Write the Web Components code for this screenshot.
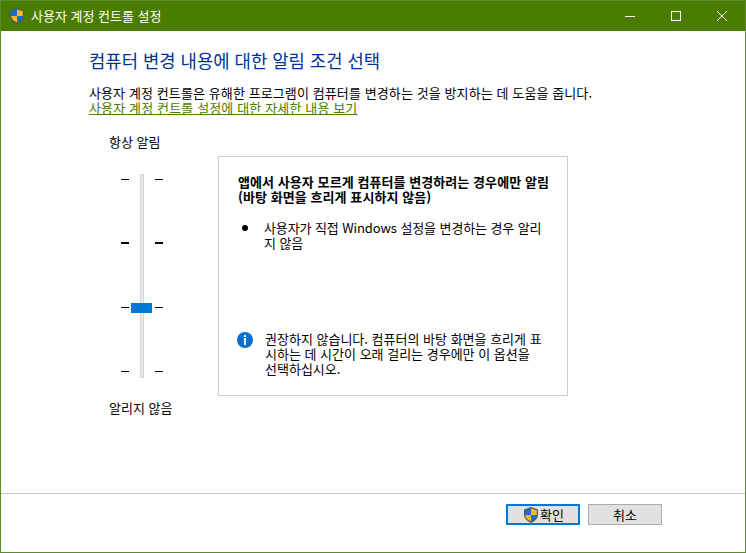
<!DOCTYPE html>
<html lang="ko">
<head>
<meta charset="utf-8">
<title>사용자 계정 컨트롤 설정</title>
<style>
  html, body { margin: 0; height: 100%; background: #fff; }
  body { font: 13px/15px "Noto Sans CJK KR", "Noto Sans", sans-serif; color: #000; overflow: hidden; }
</style>
</head>
<body>
<uac-window></uac-window>
<script>
const SHIELD = `
  <svg viewBox="0 0 14 16" width="14" height="16" aria-hidden="true">
    <path d="M7 0 14 2.4v5.4c0 3.6-3 6.3-7 8.2C3 14.1 0 11.4 0 7.8V2.4Z" fill="#4f5a63"/>
    <path d="M7 1.4V8H1.2V3.3Z" fill="#0f73c8"/>
    <path d="M7 1.4 12.8 3.3V8H7Z" fill="#f8b62c"/>
    <path d="M1.2 8H7v6.6C3.7 13 1.3 11 1.2 8Z" fill="#f8b62c"/>
    <path d="M7 8h5.8C12.7 11 10.3 13 7 14.6Z" fill="#0f73c8"/>
  </svg>`;

class UacTitlebar extends HTMLElement {
  connectedCallback() {
    this.attachShadow({ mode: "open" });
    this.shadowRoot.innerHTML = `
      <style>
        :host {
          display: flex;
          align-items: center;
          box-sizing: border-box;
          height: 31px;
          background: #4a7c00;
          border-top: 1px solid #5f8a2c;
          color: #fff;
          flex: none;
        }
        .icon { display: flex; margin: 0 7px 0 9px; }
        .title { flex: 1; padding-bottom: 1px; }
        .btn {
          width: 46px;
          height: 30px;
          display: flex;
          align-items: center;
          justify-content: center;
        }
        .btn svg { display: block; }
      </style>
      <span class="icon">${SHIELD}</span>
      <span class="title"><slot></slot></span>
      <span class="btn"><svg width="10" height="10"><path d="M0 5.5h10" stroke="#fff"/></svg></span>
      <span class="btn"><svg width="10" height="10"><rect x=".5" y=".5" width="9" height="9" fill="none" stroke="#fff"/></svg></span>
      <span class="btn"><svg width="10" height="10"><path d="M0 0l10 10M10 0L0 10" stroke="#fff"/></svg></span>
    `;
  }
}
customElements.define("uac-titlebar", UacTitlebar);

class UacSlider extends HTMLElement {
  connectedCallback() {
    this.attachShadow({ mode: "open" });
    const row = (bold) => `<div class="tick-row${bold ? " bold" : ""}"><i></i><i></i></div>`;
    this.shadowRoot.innerHTML = `
      <style>
        :host {
          display: flex;
          flex-direction: column;
          width: 129px;
          flex: none;
        }
        .label { padding-left: 20px; height: 15px; white-space: nowrap; }
        .scale {
          position: relative;
          height: 204px;
          margin: 25px 0 22px;
        }
        .track {
          position: absolute;
          left: 51px;
          top: 0;
          width: 2px;
          height: 202px;
          background: #e7eaea;
          border: 1px solid #d6d6d6;
        }
        .ticks {
          position: absolute;
          left: 32px;
          top: 5px;
          width: 42px;
          height: 193px;
          display: flex;
          flex-direction: column;
          justify-content: space-between;
        }
        .tick-row { display: flex; justify-content: space-between; height: 1px; }
        .tick-row i { display: block; width: 8px; height: 1px; background: #000; }
        .tick-row.bold i { height: 2px; margin-top: -1px; }
        .thumb {
          position: absolute;
          left: 42px;
          top: 129px;
          width: 21px;
          height: 10px;
          background: #0078d7;
        }
      </style>
      <div class="label">항상 알림</div>
      <div class="scale">
        <div class="track"></div>
        <div class="ticks">${row()}${row(true)}${row()}${row()}</div>
        <div class="thumb"></div>
      </div>
      <div class="label">알리지 않음</div>
    `;
  }
}
customElements.define("uac-slider", UacSlider);

class UacInfoBox extends HTMLElement {
  connectedCallback() {
    this.attachShadow({ mode: "open" });
    this.shadowRoot.innerHTML = `
      <style>
        :host {
          display: flex;
          flex-direction: column;
          box-sizing: border-box;
          width: 350px;
          height: 240px;
          margin-top: 22px;
          border: 1px solid #ccc;
          padding: 17px 18px 19px 19px;
          flex: none;
        }
        .head { font-weight: 700; white-space: nowrap; letter-spacing: .07px; }
        .bullet { display: flex; margin-top: 16px; flex: 1; }
        .dot { width: 6px; height: 6px; border-radius: 50%; background: #000; margin: 5px 0 0 4px; flex: none; }
        .bullet span { margin-left: 16px; width: 281px; letter-spacing: -.1px; }
        .note { display: flex; }
        .note svg { flex: none; display: block; margin: 1px 12px 0 -1px; }
        .note span { width: 280px; }
      </style>
      <div class="head">앱에서 사용자 모르게 컴퓨터를 변경하려는 경우에만 알림<br>(바탕 화면을 흐리게 표시하지 않음)</div>
      <div class="bullet"><i class="dot"></i><span>사용자가 직접 Windows 설정을 변경하는 경우 알리지 않음</span></div>
      <div class="note">
        <svg width="16" height="16" viewBox="0 0 16 16">
          <circle cx="8" cy="8" r="8" fill="#0a6fc9"/>
          <rect x="7" y="3" width="2" height="2" fill="#fff"/>
          <rect x="7" y="6" width="2" height="7" fill="#fff"/>
        </svg>
        <span>권장하지 않습니다. 컴퓨터의 바탕 화면을 흐리게 표시하는 데 시간이 오래 걸리는 경우에만 이 옵션을 선택하십시오.</span>
      </div>
    `;
  }
}
customElements.define("uac-info-box", UacInfoBox);

class UacButton extends HTMLElement {
  connectedCallback() {
    this.attachShadow({ mode: "open" });
    const primary = this.hasAttribute("primary");
    this.shadowRoot.innerHTML = `
      <style>
        :host {
          display: flex;
          align-items: center;
          justify-content: center;
          box-sizing: border-box;
          width: 74px;
          height: 21px;
          padding-left: ${primary ? "2px" : "0"};
          background: #e1e1e1;
          border: ${primary ? "2px solid #0078d7" : "1px solid #adadad"};
        }
        svg { display: block; margin-right: 2px; }
      </style>
      ${primary ? SHIELD : ""}<slot></slot>
    `;
  }
}
customElements.define("uac-button", UacButton);

class UacWindow extends HTMLElement {
  connectedCallback() {
    this.attachShadow({ mode: "open" });
    this.shadowRoot.innerHTML = `
      <style>
        :host {
          display: flex;
          flex-direction: column;
          box-sizing: border-box;
          height: 553px;
          border: solid #5f8a2c;
          border-width: 0 1px 1px;
          background: #fff;
        }
        main { flex: 1; padding: 0 0 0 88px; display: flex; flex-direction: column; }
        h1 {
          margin: 18px 0 0;
          font-size: 17.75px;
          line-height: 22px;
          font-weight: 400;
          color: #003399;
        }
        .intro { margin: 14px 0 0; white-space: nowrap; letter-spacing: .1px; }
        a { color: #4a7c00; text-decoration: underline; display: block; letter-spacing: .14px; }
        .content { display: flex; margin-top: 19px; }
        footer {
          flex: none;
          height: 59px;
          box-sizing: border-box;
          border-top: 1px solid #c8c8c8;
          display: flex;
          justify-content: flex-end;
          gap: 8px;
          padding: 10px 83px 0 0;
        }
      </style>
      <uac-titlebar>사용자 계정 컨트롤 설정</uac-titlebar>
      <main>
        <h1>컴퓨터 변경 내용에 대한 알림 조건 선택</h1>
        <p class="intro">사용자 계정 컨트롤은 유해한 프로그램이 컴퓨터를 변경하는 것을 방지하는 데 도움을 줍니다.
          <a href="#">사용자 계정 컨트롤 설정에 대한 자세한 내용 보기</a></p>
        <div class="content">
          <uac-slider></uac-slider>
          <uac-info-box></uac-info-box>
        </div>
      </main>
      <footer>
        <uac-button primary>확인</uac-button>
        <uac-button>취소</uac-button>
      </footer>
    `;
  }
}
customElements.define("uac-window", UacWindow);
</script>
</body>
</html>
